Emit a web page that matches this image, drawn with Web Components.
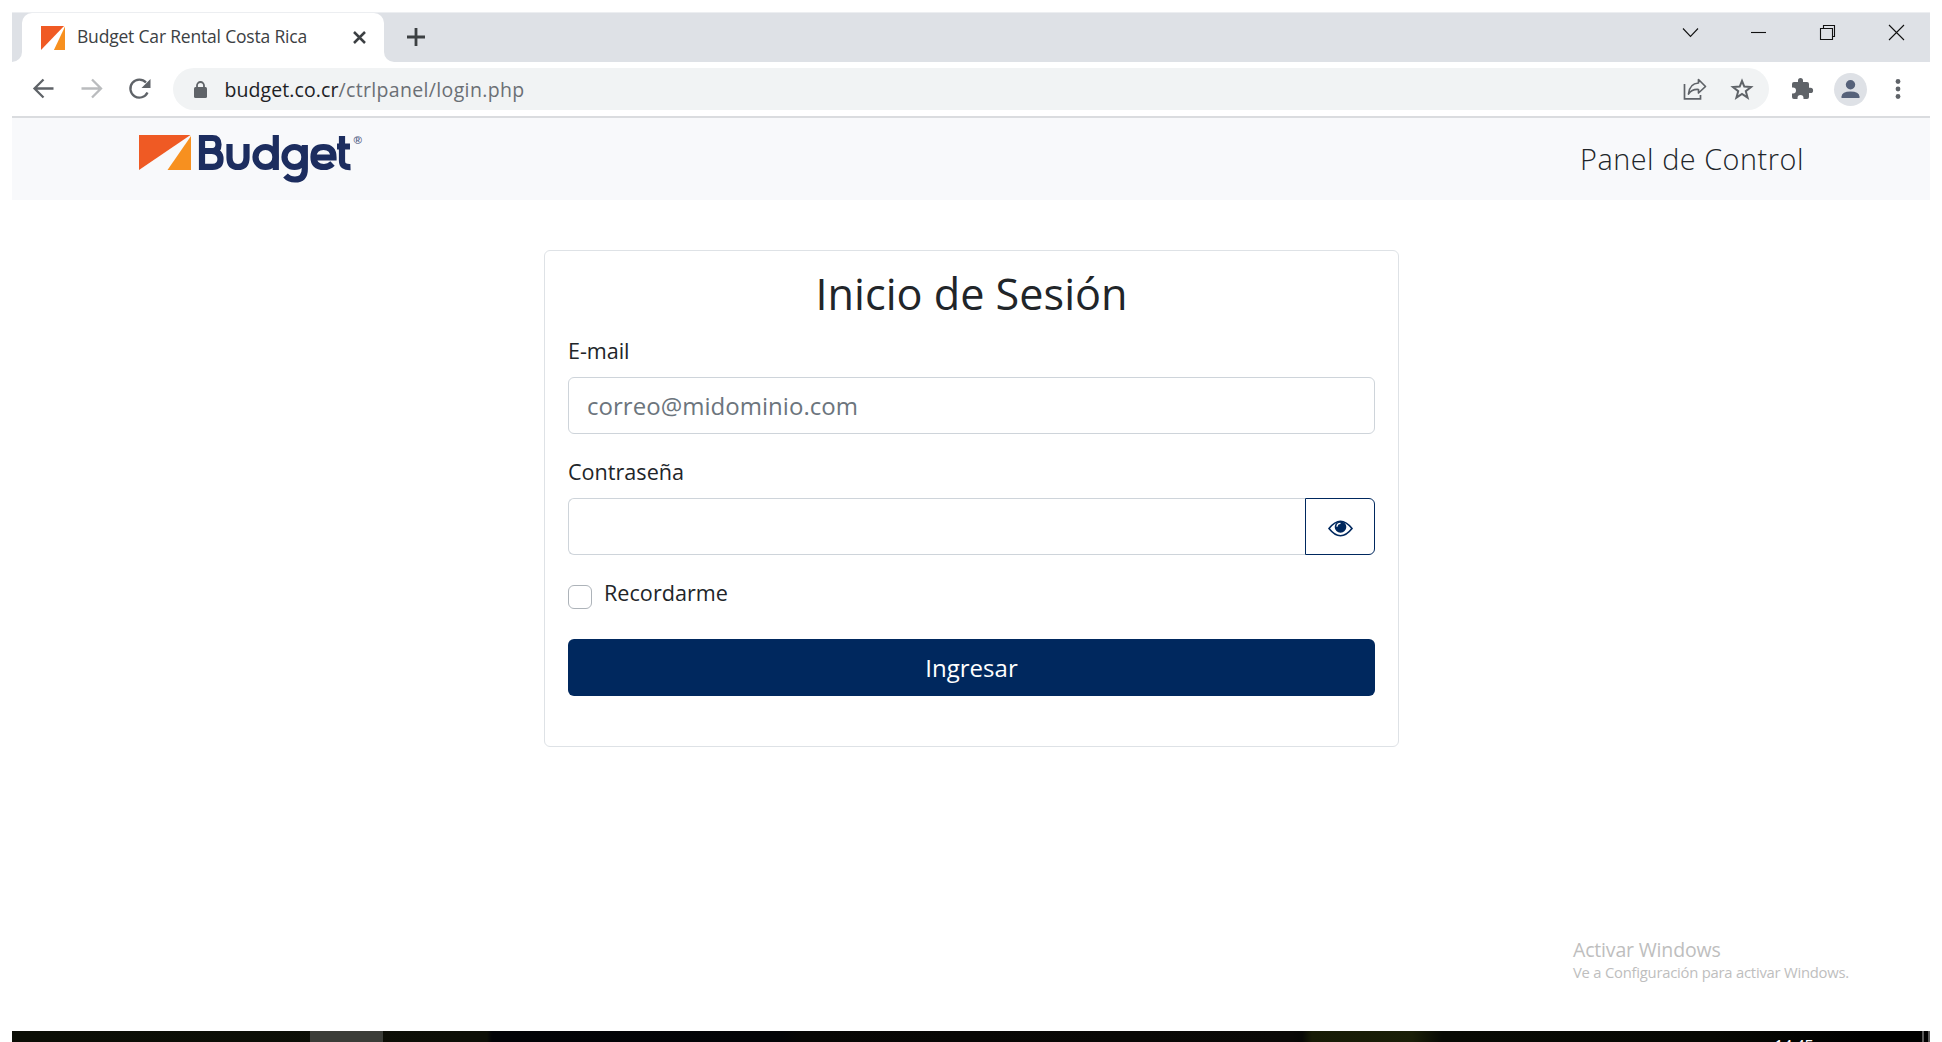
<!DOCTYPE html>
<html lang="es"><head><meta charset="utf-8"><title>Budget Car Rental Costa Rica</title>
<style>html,body{margin:0;background:#fff;height:1042px;overflow:hidden;font-family:"Open Sans","Noto Sans",sans-serif;color:#212529}</style></head><body>
<browser-window>
  <tab-strip slot="tabs"></tab-strip>
  <tool-bar slot="tools"></tool-bar>
  <site-header></site-header>
  <login-card></login-card>
  <activation-note></activation-note>
</browser-window>
<task-bar></task-bar>
<script>
function define(name, html, ready){
  const t=document.createElement('template');t.innerHTML=html;
  customElements.define(name,class extends HTMLElement{
    connectedCallback(){ if(this.shadowRoot)return; this.attachShadow({mode:'open'}).append(t.content.cloneNode(true)); if(ready)ready(this); }
  });
}
/* Text run tracked out or in to an exact width */
define('fit-text','<style>:host{display:inline-block;white-space:pre}span{display:inline-block}</style><span><slot></slot></span>',el=>{
  const s=el.shadowRoot.querySelector('span'),w=+el.getAttribute('w'),n=el.textContent.length;
  s.style.letterSpacing=((w-s.getBoundingClientRect().width)/n)+'px';
});
define('budget-mark',`<style>:host{display:block}svg{display:block;width:100%;height:100%}</style>
<svg viewBox="0 0 52 52" preserveAspectRatio="none"><path fill="#f05a24" d="M0 0H50L0 52Z"/><path fill="#f7901f" d="M52 1V52H28Z"/></svg>`);
define('budget-logo',`<style>:host{display:block;width:228px;height:56px}svg{display:block;overflow:visible}text{font-family:"Liberation Sans",sans-serif}</style>
<svg width="228" height="56" viewBox="0 0 228 56"><path fill="#ef5a24" d="M0 0H51.5L0 35Z"/><path fill="#f7901f" d="M52 1V35H28.5Z"/>
<g fill="none" stroke="#1c2d5f" stroke-width="6.2"><path d="M63 3H73.5Q79.500 3 79.500 9.500Q79.500 16 73.500 16H63M73 16Q81.500 16.500 81.500 24Q81.500 31.800 73.500 31.800H63V0"/><path d="M90.500 9V22.500Q90.500 32 99 32Q107.500 32 107.500 22.500V9"/><circle cx="126.500" cy="22" r="10"/><path d="M136.800 0V35"/><circle cx="155.500" cy="22" r="10"/><path d="M165.800 10V34Q165.800 44.500 156 44.500Q150 44.500 146.500 40.500"/><path d="M174 22.500H194.500Q194.500 12 184.500 12Q174.500 12 174.500 22Q174.500 32 185 32Q190 32 193.500 28.500"/><path d="M203 1V26Q203 32.500 211.500 32.200M198 11.500H211"/></g>
<text x="214.500" y="9" font-size="11.500" font-weight="700" fill="#59658a">®</text></svg>`);
define('browser-window',`<style>:host{display:flex;flex-direction:column;box-sizing:border-box;height:1031px;padding:12px 12px 0}</style><slot name="tabs"></slot><slot name="tools"></slot><slot></slot>`);
define('tab-strip',`<style>:host{display:flex;height:50px;background:#dee1e6;border-top:1px solid #eceef1;box-sizing:border-box;justify-content:space-between}
.l{display:flex}.edge{width:10px;background:#fff}.edge i{display:block;height:49px;background:#dee1e6;border-radius:0 0 10px 0}
.tab{width:362px;height:49px;box-sizing:border-box;background:#fff;border-radius:10px 10px 0 0;display:flex;align-items:center;padding:0 18.500px;color:#3c4043;font-size:17.500px}
budget-mark{width:24px;height:24px;margin-right:12.500px;flex:none}.tab fit-text{margin-top:-3px}.x{margin-left:auto;margin-top:-1px;flex:none}
.r{background:#fff}.r i{height:49px;width:346px;background:#dee1e6;border-radius:0 0 0 10px;padding-left:22px;box-sizing:border-box;display:flex;align-items:center}.r svg{margin-top:-2px}
.win{display:flex;padding:4px 0 0}</style>
<div class="l"><div class="edge"><i></i></div><div class="tab"><budget-mark></budget-mark><fit-text w="230">Budget Car Rental Costa Rica</fit-text><svg class="x" width="13" height="13" viewBox="0 0 13 13" stroke="#3c4043" stroke-width="2.500"><path d="M1 1 12 12M12 1 1 12"/></svg></div>
<div class="r"><i><svg width="20" height="20" viewBox="0 0 20 20" stroke="#3c4043" stroke-width="2.800"><path d="M1 10H19M10 1V19"/></svg></i></div></div>
<div class="win"><svg width="276" height="32" viewBox="1654 17 276 32" fill="none" stroke="#111" stroke-width="1.100"><path d="M1683 28.500 1690.500 36.500 1698 28.500"/><path d="M1751 32.500H1766"/><path d="M1820.500 28.500H1832.500V39.500H1820.500ZM1823.500 28V25.500H1834.500V36.500H1832"/><path d="M1889 25 1904 40M1904 25 1889 40"/></svg></div>`);
define('tool-bar',`<style>:host{display:flex;height:56px;box-sizing:border-box;border-bottom:2px solid #dadcdf;align-items:center;background:#fff}
.nav{width:161px;height:54px;flex:none}.pill{width:1596px;flex:none;height:42px;border-radius:21px;background:#f1f3f4;display:flex;align-items:center;box-sizing:border-box;padding:0 14px 0 20.500px;font-size:19.500px;color:#202124}
.g{color:#6b6f74}.lock{margin-right:18px}.act{margin-left:auto}.ext{flex:none}svg{display:block}</style>
<svg class="nav" viewBox="12.500 62 161 54" fill="none" stroke="#5f6368" stroke-width="2.300"><path d="M54 88.500H35.500M44 79.500 35 88.500 44 97.500"/><path stroke="#babcbe" d="M82 88.500H101M92.500 79.500 101.500 88.500 92.500 97.500"/><path d="M148 92.500A9 9 0 1 1 146.500 82.500"/><path fill="#5f6368" stroke="none" d="M151 79V88H142Z"/></svg>
<div class="pill"><svg class="lock" width="13" height="17" viewBox="0 0 13 17"><rect y="6" width="13" height="11" rx="1.500" fill="#5f6368"/><path d="M3 7V4.500A3.500 3.500 0 0 1 10 4.500V7" fill="none" stroke="#5f6368" stroke-width="1.800"/></svg><fit-text w="114">budget.co.cr</fit-text><fit-text class="g" w="186">/ctrlpanel/login.php</fit-text>
<svg class="act" width="73" height="28" viewBox="1682 75 73 28" fill="none" stroke="#5f6368" stroke-width="1.700"><path d="M1684.500 84V98.800H1700.500V95"/><path stroke-linejoin="round" d="M1688.500 94Q1689.500 83.500 1698.500 83V79.500L1705.500 86.500 1698.500 93V89.500Q1692 89 1688.500 94Z"/><path stroke-width="2" d="M1742 81 1744.300 86.600 1751 87 1745.800 91.200 1747.600 97.700 1742 94 1736.400 97.700 1738.200 91.200 1733 87 1739.700 86.600Z"/></svg></div>
<svg class="ext" width="160" height="54" viewBox="1769 62 160 54"><path fill="#5f6368" d="M1794 82H1798V80.500A2.500 2.500 0 0 1 1803 80.500V82H1807Q1809 82 1809 84V87.800H1810.500A2.600 2.600 0 0 1 1810.500 93H1809V97Q1809 99 1807 99H1803.500V98A2.900 2.900 0 0 0 1797.500 98V99H1794Q1792 99 1792 97V93.500H1793A2.900 2.900 0 0 0 1793 87.500H1792V84Q1792 82 1794 82Z"/><circle cx="1850.500" cy="89.500" r="16.500" fill="#dee1e6"/><circle cx="1850.500" cy="84.800" r="4.700" fill="#56627a"/><path fill="#56627a" d="M1841.500 98V96.500Q1842 91.500 1850.500 91.500T1859.500 96.500V98Z"/><g fill="#5f6368"><circle cx="1898" cy="81.500" r="2.400"/><circle cx="1898" cy="89" r="2.400"/><circle cx="1898" cy="96.500" r="2.400"/></g></svg>`);
define('site-header',`<style>:host{display:flex;height:82px;background:#f8f9fb;justify-content:space-between;align-items:flex-start;padding:0 126px 0 127px}
budget-logo{margin-top:17px}fit-text{font-size:28.800px;font-weight:300;line-height:44px;margin-top:19px;color:#212529}</style><budget-logo></budget-logo><fit-text w="224">Panel de Control</fit-text>`);
define('text-field',`<style>:host{display:flex;flex-direction:column;font-size:21.600px}label{line-height:32px;height:32px;margin-bottom:10px}.row{display:flex}
.box{flex:1;height:57px;box-sizing:border-box;border:1px solid #ced4da;border-radius:6px;padding:0 18px;line-height:56px;font-size:24px;color:#6c757d}
:host([reveal]) .box{border-radius:6px 0 0 6px;border-right:0}button{display:none}
:host([reveal]) button{display:flex;align-items:center;justify-content:center;width:70px;height:57px;padding:3px 0 0;box-sizing:border-box;background:#fff;border:1px solid #00285e;border-radius:0 6px 6px 0}</style>
<label><slot name="label"></slot></label><div class="row"><div class="box"><slot></slot></div><button type="button" aria-label="Mostrar"><svg width="25" height="17" viewBox="0 0 25 17"><path d="M1 8.500Q12.500-6 24 8.500Q12.500 23 1 8.500Z" fill="#fff" stroke="#00285e" stroke-width="1.600"/><circle cx="12.500" cy="7" r="5.800" fill="#00285e"/><path d="M9 6.800A3.500 3.500 0 0 1 12.500 3.300" fill="none" stroke="#fff" stroke-width="1.200"/></svg></button></div>`);
define('remember-check',`<style>:host{display:flex;height:32px;font-size:21.600px;line-height:32px}i{width:24px;height:24px;box-sizing:border-box;border:1px solid #adb3b9;border-radius:6px;margin:8px 12px 0 0}</style><i></i><slot></slot>`);
define('submit-button',`<style>:host{display:block;height:57px;border-radius:6px;background:#00285e;color:#fff;font-size:24px;line-height:57px;text-align:center}</style><slot></slot>`);
define('login-card',`<style>:host{display:flex;flex-direction:column;box-sizing:border-box;width:855px;height:497px;margin:50px 0 0 532px;border:1px solid #dee2e6;border-radius:6px;padding:17px 23px}
h1{font-size:43.200px;font-weight:400;line-height:52px;height:52px;margin:0;text-align:center}.a{margin-top:15px}.b{margin-top:22px}remember-check{margin-top:22px}submit-button{margin-top:30px}</style>
<h1><fit-text w="312">Inicio de Sesión</fit-text></h1>
<text-field class="a"><fit-text slot="label" w="61.500">E-mail</fit-text><fit-text w="271">correo@midominio.com</fit-text></text-field>
<text-field class="b" reveal><fit-text slot="label" w="116">Contraseña</fit-text></text-field>
<remember-check><fit-text w="124">Recordarme</fit-text></remember-check><submit-button><fit-text w="92.500">Ingresar</fit-text></submit-button>`);
define('activation-note',`<style>:host{display:flex;flex-direction:column;margin:188px 0 0 1561px;color:#bebebe}.a{font-size:19.500px;line-height:30px}.b{font-size:14.800px;line-height:16px;margin-top:-1px}</style><fit-text class="a" w="147.500">Activar Windows</fit-text><fit-text class="b" w="276">Ve a Configuración para activar Windows.</fit-text>`);
define('task-bar',`<style>:host{display:flex;height:11px;margin:0 12px;background:linear-gradient(90deg,#0b0e06 0,#0d0f07 475px,#020307 480px,#030407 770px,#070604 790px,#0a0907 1280px,#070806 1290px,#171b06 1300px,#1a1f08 1400px,#080a04 1430px,#070803 1700px,#000 1850px);overflow:hidden;color:#fff}
.app{margin-left:298px;width:73px;background:#3b3d38}svg{margin-left:auto}.clock{margin-left:1391px;font-size:17px;line-height:20px;height:20px;margin-top:5px}</style>
<div class="app"></div><div class="clock"><fit-text w="39">14:45</fit-text></div><svg width="9" height="11"><path d="M2 0V11M8 0V11" stroke="#777" stroke-width="1.500"/></svg>`);
</script></body></html>
